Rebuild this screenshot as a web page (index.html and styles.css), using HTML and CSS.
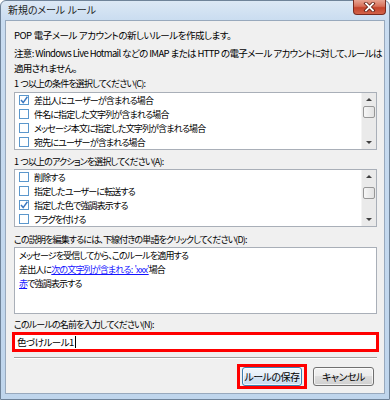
FILE: index.html
```html
<!DOCTYPE html>
<html lang="ja">
    <head>
        <meta charset="UTF-8">
        <meta name="viewport" content="width=device-width, initial-scale=1.0">
        <title>新規のメール ルール</title>
        <link rel="stylesheet" href="styles.css">
    </head>
    <body>
        <div class="window">
            <div class="titlebar">
                <span class="title">新規のメール ルール</span>
                <div class="close">
                    <svg width="13" height="10" viewBox="0 0 13 10">
                        <path d="M3 1.5 L10 8.5 M10 1.5 L3 8.5" stroke="#5a1a10" stroke-width="3.4" stroke-linecap="square"/>
                        <path d="M3 1.5 L10 8.5 M10 1.5 L3 8.5" stroke="#ffffff" stroke-width="1.8" stroke-linecap="square"/>
                    </svg>
                </div>
            </div>
            <div class="client">
                <p class="intro">POP 電子メール アカウントの新しいルールを作成します。</p>
                <p class="note">注意: Windows Live Hotmail などの IMAP または HTTP の電子メール アカウントに対して、ルールは<br>適用されません。</p>

                <p class="label first">1 つ以上の条件を選択してください(C):</p>
                <div class="listbox">
                    <ul class="items">
                        <li class="item"><span class="box checked"><svg width="10" height="10" viewBox="0 0 10 10"><path d="M2 5 L4.2 7.6 L8.4 1.8" fill="none" stroke="#3b78c0" stroke-width="1.5"/></svg></span>差出人にユーザーが含まれる場合</li>
                        <li class="item"><span class="box"></span>件名に指定した文字列が含まれる場合</li>
                        <li class="item"><span class="box"></span>メッセージ本文に指定した文字列が含まれる場合</li>
                        <li class="item"><span class="box"></span>宛先にユーザーが含まれる場合</li>
                    </ul>
                    <div class="scrollbar">
                        <div class="arrow up"></div>
                        <div class="track"><div class="thumb"></div></div>
                        <div class="arrow down"></div>
                    </div>
                </div>

                <p class="label second">1 つ以上のアクションを選択してください(A):</p>
                <div class="listbox">
                    <ul class="items">
                        <li class="item"><span class="box"></span>削除する</li>
                        <li class="item"><span class="box"></span>指定したユーザーに転送する</li>
                        <li class="item"><span class="box checked"><svg width="10" height="10" viewBox="0 0 10 10"><path d="M2 5 L4.2 7.6 L8.4 1.8" fill="none" stroke="#3b78c0" stroke-width="1.5"/></svg></span>指定した色で強調表示する</li>
                        <li class="item"><span class="box"></span>フラグを付ける</li>
                    </ul>
                    <div class="scrollbar">
                        <div class="arrow up"></div>
                        <div class="track"><div class="thumb lower"></div></div>
                        <div class="arrow down"></div>
                    </div>
                </div>

                <p class="label third">この説明を編集するには、下線付きの単語をクリックしてください(D):</p>
                <div class="description">
                    <p>メッセージを受信してから、このルールを適用する</p>
                    <p>差出人に<a href="#">次の文字列が含まれる: 'xxx'</a>場合</p>
                    <p><a href="#">赤</a>で強調表示する</p>
                </div>

                <p class="label fourth">このルールの名前を入力してください(N):</p>
                <div class="highlight name-field">
                    <div class="name-input">色づけルール1<span class="caret"></span></div>
                </div>

                <div class="separator"></div>

                <div class="buttons">
                    <div class="highlight save-frame">
                        <button class="btn default">ルールの保存</button>
                    </div>
                    <button class="btn">キャンセル</button>
                </div>
            </div>
        </div>
    </body>
</html>
```

FILE: styles.css
```css
body {
    margin: 0;
    font-family: "Noto Sans CJK JP", "Noto Sans", sans-serif;
    font-size: 9.5px;
    font-feature-settings: "palt";
    letter-spacing: -0.5px;
    word-spacing: 0.5px;
    color: #000000;
}
p {
    margin: 0;
    white-space: nowrap;
}
.window {
    width: 390px;
    height: 400px;
    box-sizing: border-box;
    border: 1px solid #6f8399;
    border-radius: 6px 6px 0 0;
    background: linear-gradient(#dce8f5, #c9dcf0 20px, #bfd5ec);
    display: flex;
    flex-direction: column;
}
.titlebar {
    height: 19px;
    display: flex;
    align-items: flex-start;
}
.title {
    margin: 3px 0 0 7px;
    font-size: 10px;
    line-height: 12px;
    letter-spacing: -0.1px;
    color: #1e1e1e;
}
.close {
    margin: -1px 3px 0 auto;
    width: 33px;
    height: 15px;
    box-sizing: border-box;
    border: 1px solid #7a2a1e;
    border-top: none;
    border-radius: 0 0 4px 4px;
    background: linear-gradient(#e8a593, #d7705a 45%, #c4432b 55%, #d2634a);
    display: flex;
    align-items: center;
    justify-content: center;
}
.close svg {
    display: block;
}
.client {
    margin: 0 4px;
    height: 374px;
    box-sizing: border-box;
    border: 1px solid #98a9bd;
    background-color: #f0f0f0;
    padding: 0 7px 0 8px;
}
.intro {
    margin-top: 7px;
    line-height: 14px;
}
.note {
    margin-top: 4px;
    line-height: 15px;
    letter-spacing: -0.68px;
    word-spacing: 0.3px;
}
/* labels, list rows and the description run narrower than the intro */
.label,
.item,
.description p {
    font-size: 9px;
    letter-spacing: -0.85px;
    word-spacing: 1px;
}
.label {
    line-height: 14px;
}
.label.first {
    margin-top: 1px;
}
.label.second {
    margin-top: 5px;
}
.label.third {
    margin-top: 6px;
}
.label.fourth {
    margin-top: 4px;
}
.listbox {
    height: 58px;
    box-sizing: border-box;
    border: 1px solid #a9afb8;
    background-color: #ffffff;
    display: flex;
}
.label.first + .listbox {
    margin-top: 1px;
}
.items {
    list-style: none;
    margin: 0;
    padding: 0;
    flex: 1;
}
.item {
    height: 14px;
    display: flex;
    align-items: center;
    padding-left: 4px;
    white-space: nowrap;
}
.box {
    width: 10px;
    height: 10px;
    box-sizing: border-box;
    border: 1px solid #5b97cc;
    background-color: #ffffff;
    margin-right: 5px;
    flex-shrink: 0;
    position: relative;
}
.box svg {
    position: absolute;
    left: -1px;
    top: -1px;
}
.scrollbar {
    width: 14px;
    background-color: #eaeaea;
    border-left: 1px solid #f4f4f4;
    display: flex;
    flex-direction: column;
}
.arrow {
    height: 13px;
    display: flex;
    align-items: center;
    justify-content: center;
}
.arrow::before {
    content: "";
    width: 0;
    height: 0;
    border-left: 3px solid transparent;
    border-right: 3px solid transparent;
}
.arrow.up::before {
    border-bottom: 3px solid #404040;
}
.arrow.down::before {
    border-top: 3px solid #404040;
}
.track {
    flex: 1;
}
.thumb {
    margin: 0 1px;
    height: 12px;
    box-sizing: border-box;
    border: 1px solid #979797;
    border-radius: 2px;
    background: linear-gradient(to right, #f6f6f6, #e2e2e2);
}
.thumb.lower {
    margin-top: 4px;
}
.description {
    height: 67px;
    box-sizing: border-box;
    border: 1px solid #a9afb8;
    background-color: #ffffff;
    padding: 1px 0 0 4px;
}
.description p {
    line-height: 14px;
}
.description a {
    color: #1414ff;
    text-decoration: underline;
}
.highlight {
    border: 3px solid #ff0000;
}
.name-field {
    margin: 0 -2px;
    height: 20px;
    box-sizing: border-box;
}
.name-input {
    height: 14px;
    background-color: #ffffff;
    padding-left: 2px;
    line-height: 14px;
    display: flex;
    align-items: center;
}
.caret {
    width: 1px;
    height: 12px;
    background-color: #000000;
    margin-left: 1px;
}
.separator {
    margin-top: 5px;
    height: 1px;
    background-color: #a0a0a0;
    border-bottom: 1px solid #ffffff;
}
.buttons {
    margin-top: 5px;
    display: flex;
    justify-content: flex-end;
    align-items: flex-start;
    gap: 6px;
    padding-right: 3px;
}
.save-frame {
    height: 25px;
    box-sizing: border-box;
    padding: 0 2px;
}
.btn {
    width: 60px;
    height: 19px;
    margin: 0;
    padding: 0;
    border: 1px solid #707070;
    border-radius: 3px;
    background: linear-gradient(#f2f2f2, #ebebeb 50%, #dddddd 50%, #cfcfcf);
    font-family: inherit;
    font-size: 10px;
    letter-spacing: -0.5px;
    font-feature-settings: "palt";
    color: #000000;
    box-shadow: inset 0 0 0 1px rgba(255, 255, 255, 0.7);
}
.buttons > .btn {
    margin-top: 3px;
    width: 61px;
}
.btn.default {
    border-color: #3c7fb1;
    background: linear-gradient(#f1f7fc, #e4eef8 50%, #d4e4f3 50%, #c9dcef);
}
```
